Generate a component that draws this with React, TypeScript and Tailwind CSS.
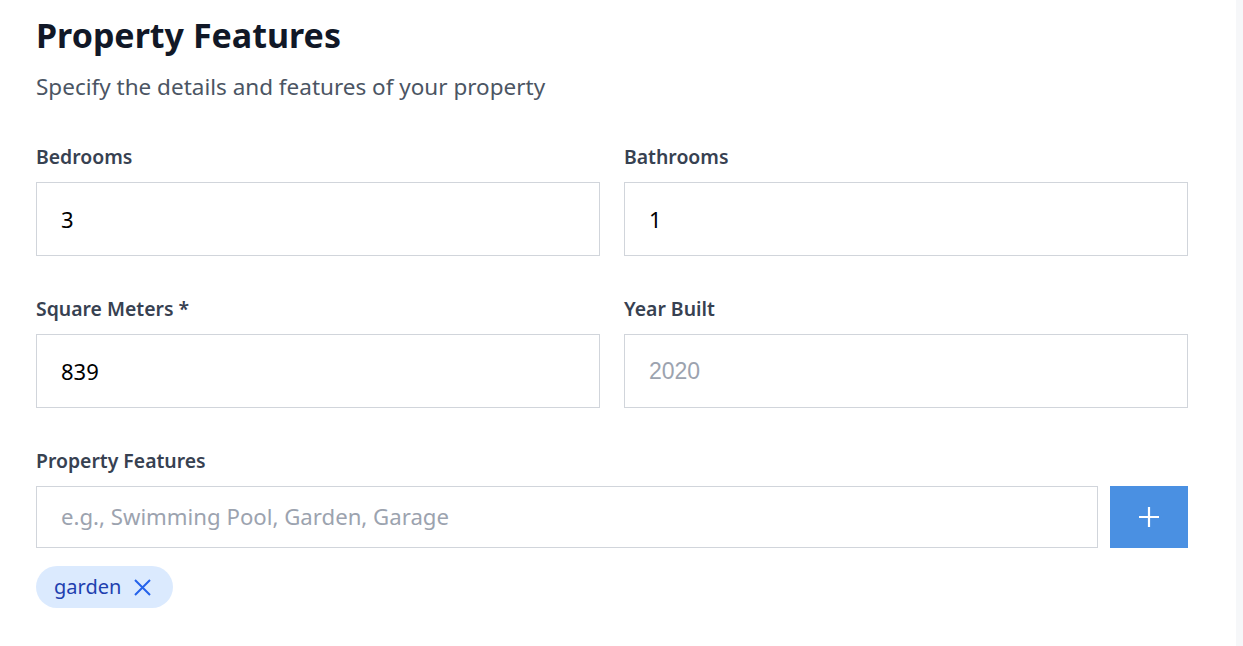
import React from "react";

const font = { fontFamily: '"Noto Sans", "Open Sans", sans-serif' };

function Field({ label, value, placeholder }: { label: string; value?: string; placeholder?: string }) {
  return (
    <div className="flex flex-col">
      <label className="text-[19.4px] font-semibold text-[#374151] leading-[26px] mb-[12px]">{label}</label>
      <div className="h-[74px] border border-[#d1d5db] bg-white flex items-center px-[24px]">
        {value ? (
          <span className="text-[22px] text-black">{value}</span>
        ) : (
          <span className="text-[23px] text-[#9ca3af]" style={{ fontFamily: '"Liberation Sans", Arial, sans-serif' }}>{placeholder}</span>
        )}
      </div>
    </div>
  );
}

export default function App() {
  return (
    <div className="flex w-[1243px] h-[646px] bg-white overflow-hidden" style={font}>
      <div className="flex-1 pl-[36px] pr-[48px] pt-[10px]">
        <h1 className="text-[34px] font-bold text-[#111827] leading-[50px]">Property Features</h1>
        <p className="text-[22.5px] text-[#4b5563] leading-[30px] mt-[12px]">Specify the details and features of your property</p>
        <div className="grid grid-cols-2 gap-x-[24px] gap-y-[40px] mt-[42px]">
          <Field label="Bedrooms" value="3" />
          <Field label="Bathrooms" value="1" />
          <Field label="Square Meters *" value="839" />
          <Field label="Year Built" placeholder="2020" />
        </div>
        <div className="mt-[40px]">
          <label className="block text-[19.4px] font-semibold text-[#374151] leading-[26px] mb-[12px]">Property Features</label>
          <div className="flex gap-[12px]">
            <div className="flex-1 h-[62px] border border-[#d1d5db] flex items-center px-[24px]">
              <span className="text-[22.2px] text-[#9ca3af]">e.g., Swimming Pool, Garden, Garage</span>
            </div>
            <button className="w-[78px] h-[62px] bg-[#4a90e2] flex items-center justify-center">
              <svg width="22" height="22" viewBox="0 0 22 22" fill="none" stroke="white" strokeWidth="2.2">
                <path d="M11 1v20M1 11h20" />
              </svg>
            </button>
          </div>
          <div className="flex mt-[18px]">
            <span className="h-[42px] rounded-full bg-[#dbeafe] flex items-center pl-[18px] pr-[22px] gap-[13px]">
              <span className="text-[20px] text-[#1e40af]">garden</span>
              <svg width="17" height="17" viewBox="0 0 17 17" fill="none" stroke="#2563eb" strokeWidth="2">
                <path d="M1 1l15 15M16 1L1 16" />
              </svg>
            </span>
          </div>
        </div>
      </div>
      <div className="w-[7px] bg-[#f6f7f9]" />
    </div>
  );
}
